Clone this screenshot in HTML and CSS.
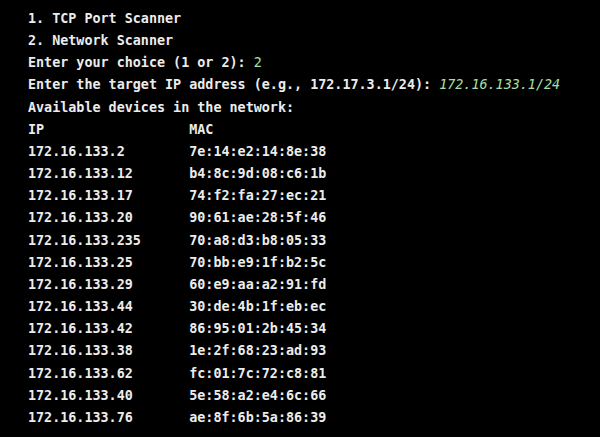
FILE: index.html
```html
<!DOCTYPE html>
<html>
<head>
<meta charset="utf-8">
<link rel="stylesheet" href="styles.css">
</head>
<body>
<pre class="term">1. TCP Port Scanner
2. Network Scanner
Enter your choice (1 or 2): <span class="in">2</span>
Enter the target IP address (e.g., 172.17.3.1/24): <span class="in it">172.16.133.1/24</span>
Available devices in the network:
IP                  MAC
172.16.133.2        7e:14:e2:14:8e:38
172.16.133.12       b4:8c:9d:08:c6:1b
172.16.133.17       74:f2:fa:27:ec:21
172.16.133.20       90:61:ae:28:5f:46
172.16.133.235      70:a8:d3:b8:05:33
172.16.133.25       70:bb:e9:1f:b2:5c
172.16.133.29       60:e9:aa:a2:91:fd
172.16.133.44       30:de:4b:1f:eb:ec
172.16.133.42       86:95:01:2b:45:34
172.16.133.38       1e:2f:68:23:ad:93
172.16.133.62       fc:01:7c:72:c8:81
172.16.133.40       5e:58:a2:e4:6c:66
172.16.133.76       ae:8f:6b:5a:86:39</pre>
</body>
</html>
```
FILE: styles.css
```css
html, body {
  margin: 0;
  background: #000;
  height: 100%;
  overflow: hidden;
}
.term {
  margin: 0;
  padding: 8px 0 0 28px;
  font-family: "DejaVu Sans Mono", "Liberation Mono", monospace;
  font-size: 13.4px;
  line-height: 22.15px;
  font-weight: 600;
  color: #ececec;
  white-space: pre;
}
.in {
  color: #a8e0a8;
  font-weight: 400;
}
.it {
  font-style: italic;
}
```
